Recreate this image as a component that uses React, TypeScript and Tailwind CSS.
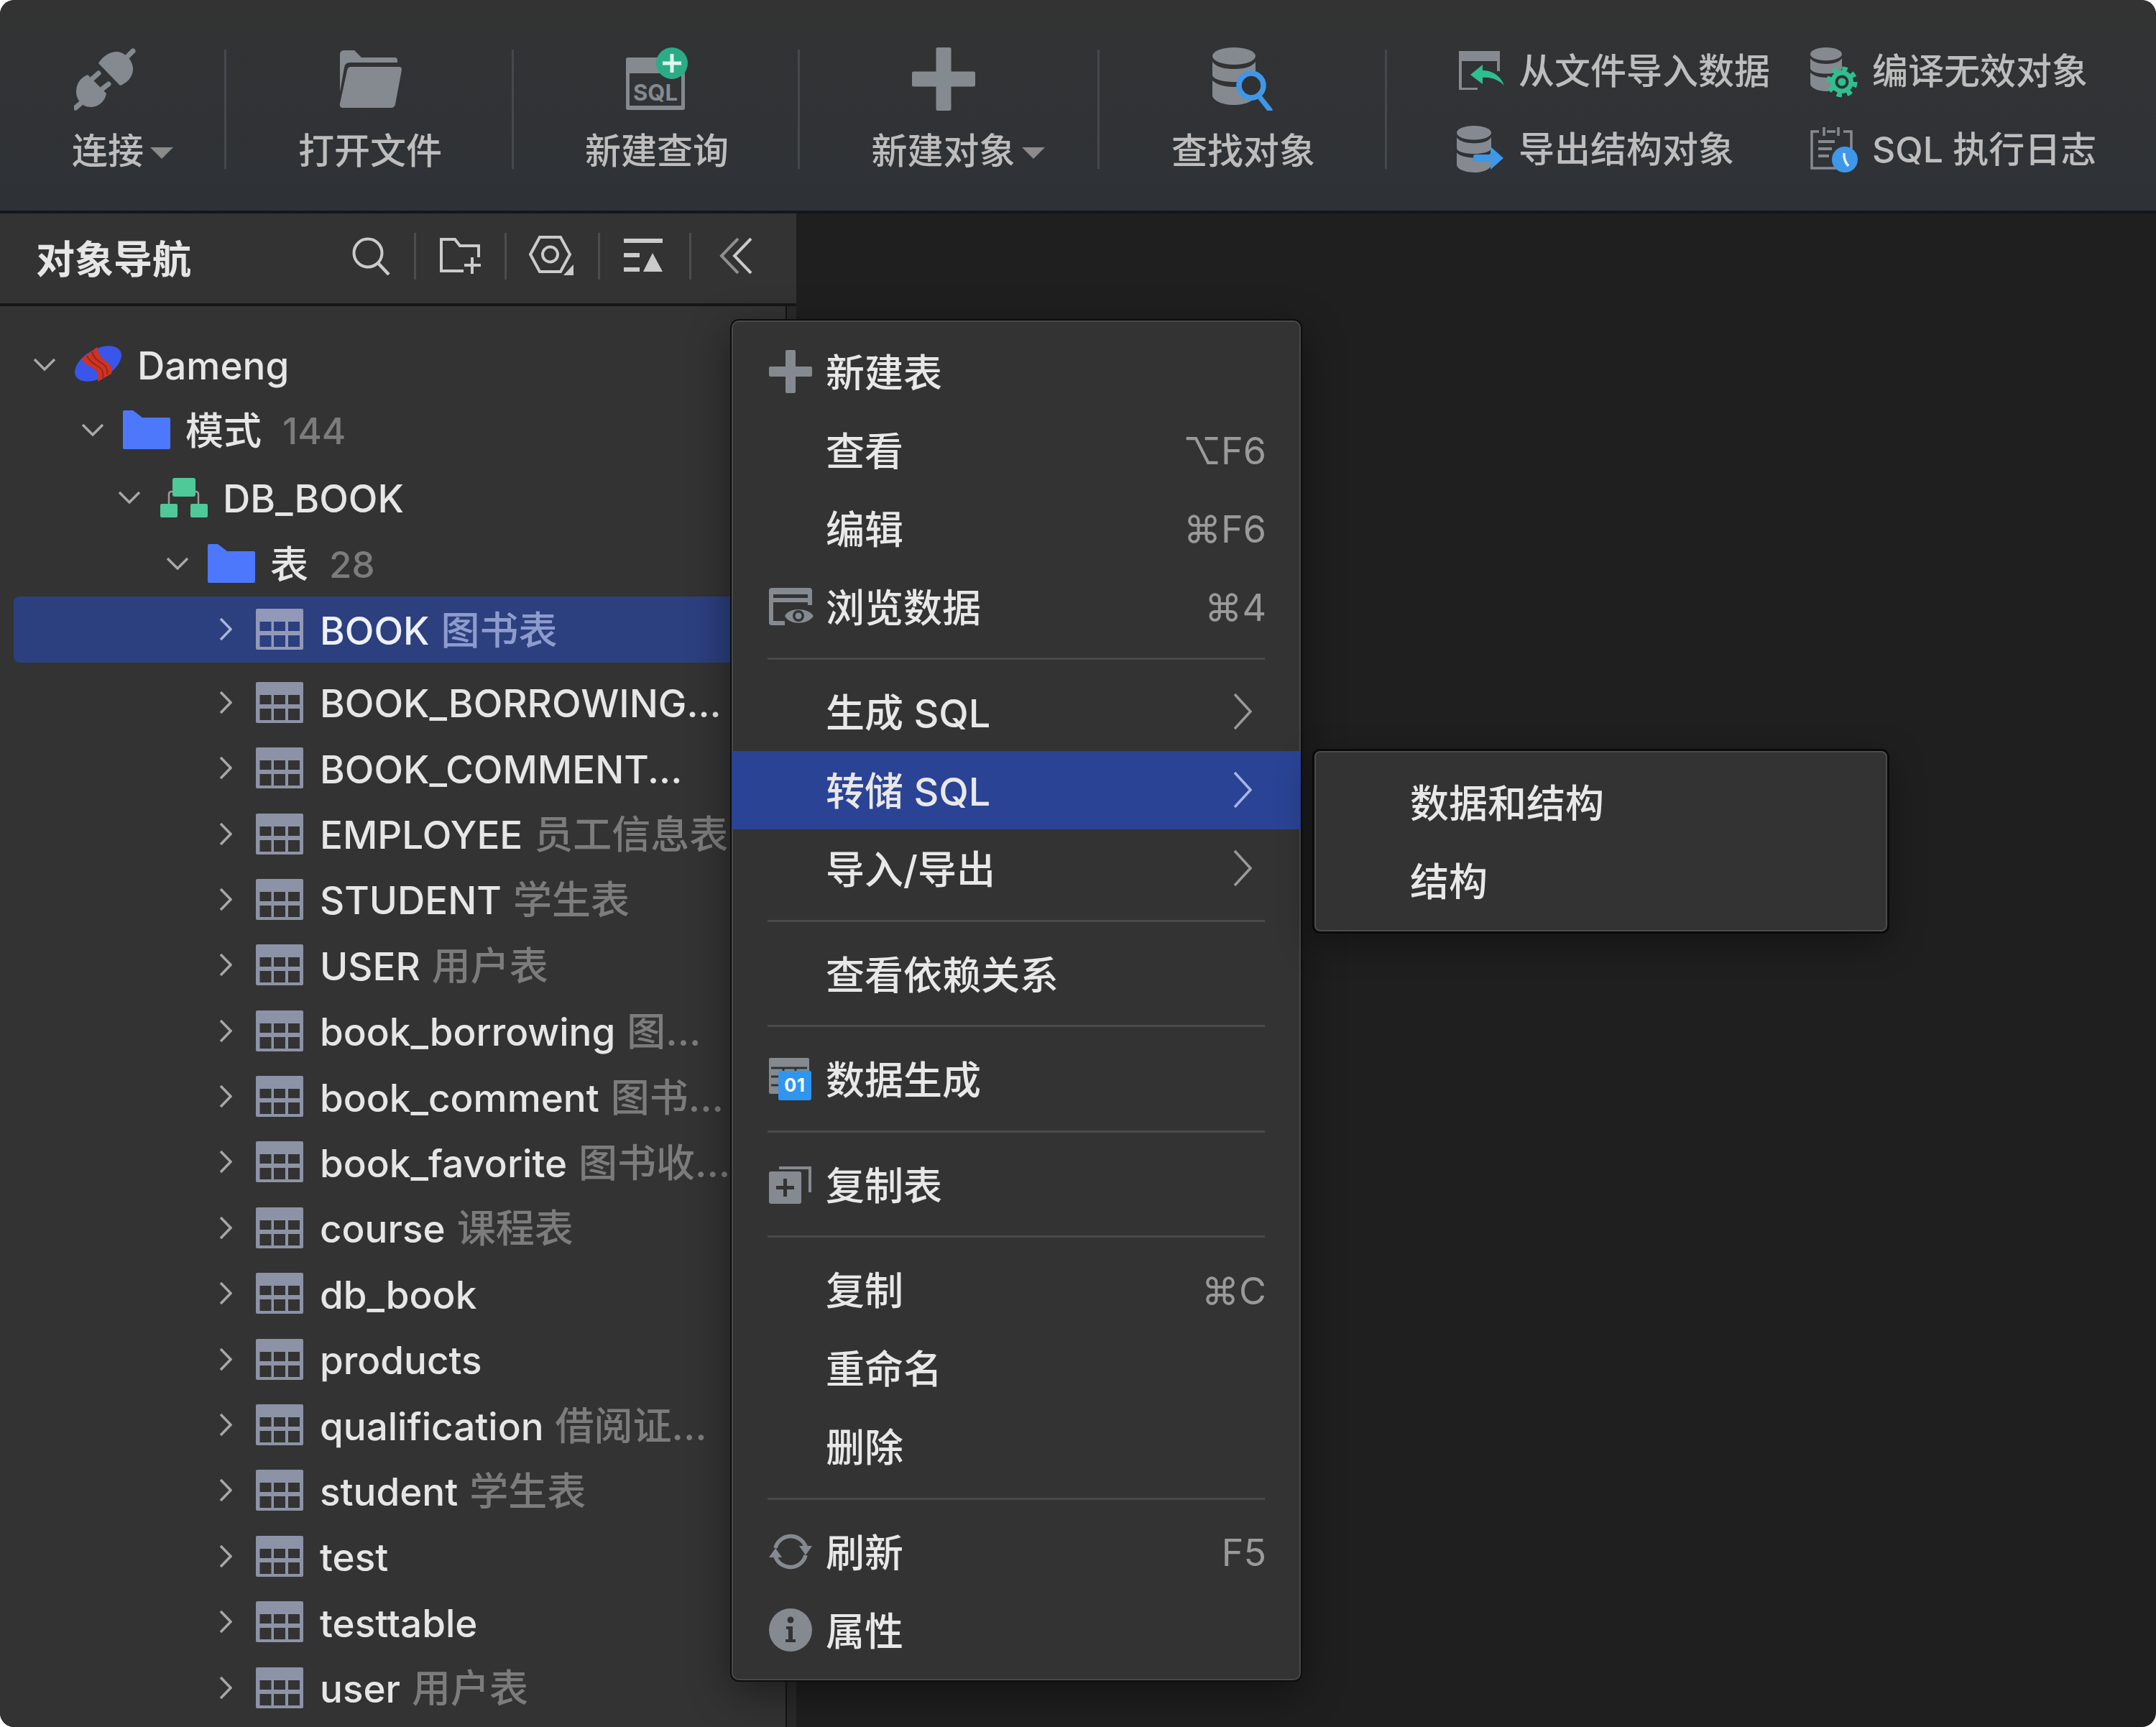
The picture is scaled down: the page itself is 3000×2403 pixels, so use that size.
import type { ReactNode } from "react";

const GREY = "#858a91";
const BLUE = "#3f97e8";
const GREEN = "#2fbf8f";

function DbStack({ w, h }: { w: number; h: number }) {
  return (
    <svg width={w} height={h} viewBox="0 0 60 80" preserveAspectRatio="none" className="block">
      <ellipse cx="30" cy="12" rx="30" ry="12" fill={GREY} />
      <path d="M0 20 C6 28 18 30 30 30 C42 30 54 28 60 20 V38 C60 44 46 48 30 48 C14 48 0 44 0 38 Z" fill={GREY} />
      <path d="M0 46 C6 52 18 55 30 55 C42 55 54 52 60 46 V66 C60 74 46 80 30 80 C14 80 0 74 0 66 Z" fill={GREY} />
    </svg>
  );
}

function PlugIcon() {
  return (
    <svg width="86" height="88" viewBox="23 16 86 88" className="block mr-[8px]">
      <path d="M57 38 C64 26 76 21 84 22 C96 24 106 36 105 48 C104 58 96 66 87 69 Z" fill={GREY} />
      <path d="M98 28 L105 21" stroke={GREY} strokeWidth="7" strokeLinecap="round" />
      <path d="M42 54 L68 80 C66 92 56 99 46 99 C34 99 26 88 26 78 C26 66 32 58 42 54 Z" fill={GREY} />
      <path d="M48 60 L57 52 M62 74 L71 67" stroke={GREY} strokeWidth="7" strokeLinecap="round" />
      <path d="M32 94 L25 100" stroke={GREY} strokeWidth="7" strokeLinecap="round" />
    </svg>
  );
}

function OpenFolderIcon() {
  return (
    <svg width="88" height="80" viewBox="0 0 88 80" className="block mt-[4px]">
      <path d="M2 6 Q2 0 8 0 H22 L32 10 H78 Q82 10 82 14 V17 H16 Q9 17 8 24 L2 58 Z" fill={GREY} />
      <path d="M17 23 H84 Q88 23 88 27 L79 75 Q78 80 73 80 H6 Q1 80 2 74 L12 28 Q13 23 17 23 Z" fill={GREY} />
    </svg>
  );
}

function SqlIcon() {
  return (
    <svg width="88" height="88" viewBox="12 16 88 88" className="block">
      <rect x="13" y="30" width="82" height="73" rx="3" fill={GREY} />
      <rect x="18" y="52" width="72" height="45" fill="#313336" />
      <text x="54" y="90" textAnchor="middle" fontSize="31" fontWeight="700" fill={GREY} fontFamily="Inter, sans-serif">SQL</text>
      <circle cx="77" cy="38" r="22" fill="#2bab86" />
      <path d="M77 25 V51 M64 38 H90" stroke="#dcf7ee" strokeWidth="5" />
    </svg>
  );
}

function PlusIcon({ size, bar }: { size: number; bar: number }) {
  return (
    <svg width={size} height={size} viewBox={`0 0 ${size} ${size}`} className="block">
      <rect x={(size - bar) / 2} y="0" width={bar} height={size} rx="2" fill={GREY} />
      <rect x="0" y={(size - bar) / 2} width={size} height={bar} rx="2" fill={GREY} />
    </svg>
  );
}

function FindIcon() {
  return (
    <div className="relative w-[86px] h-[88px]">
      <DbStack w={60} h={80} />
      <svg width="86" height="88" viewBox="0 0 86 88" className="absolute left-0 top-0">
        <circle cx="54" cy="53" r="17" fill="#2f3235" stroke={BLUE} strokeWidth="7.5" />
        <path d="M65 68 L80 87" stroke={BLUE} strokeWidth="7" strokeLinecap="round" />
      </svg>
    </div>
  );
}

function ImportIcon() {
  return (
    <svg width="64" height="56" viewBox="0 0 64 56" className="block ml-[3px]">
      <path d="M0 0 H57 V28 H53 V14 H4 V51 H26 V54 H0 Z" fill={GREY} />
      <path d="M16 33 L33 19 V27 C46 27 58 34 63 48 C54 39 44 36 33 37 V46 Z" fill={GREEN} />
    </svg>
  );
}

function CompileIcon() {
  return (
    <div className="relative w-[66px] h-[66px]">
      <DbStack w={44} h={61} />
      <svg width="44" height="44" viewBox="0 0 44 44" className="absolute left-[22px] top-[26px]">
        <circle cx="22" cy="22" r="18" fill="none" stroke={GREEN} strokeWidth="7" strokeDasharray="7 7.1" />
        <circle cx="22" cy="22" r="16" fill={GREEN} />
        <circle cx="22" cy="22" r="7.5" fill="none" stroke="#2f3235" strokeWidth="4" />
      </svg>
    </div>
  );
}

function ExportIcon() {
  return (
    <div className="relative w-[66px] h-[66px]">
      <DbStack w={48} h={65} />
      <svg width="42" height="32" viewBox="0 0 42 32" className="absolute left-[23px] top-[29px]">
        <path d="M2 11 H24 V0 L42 16 L24 32 V21 H2 Q0 21 0 16 Q0 11 2 11 Z" fill={BLUE} />
      </svg>
    </div>
  );
}

function LogIcon() {
  return (
    <svg width="66" height="66" viewBox="0 0 66 66" className="block">
      <path d="M12 8 H2 V59 H36" fill="none" stroke={GREY} strokeWidth="3.5" />
      <path d="M46 8 H57 V32" fill="none" stroke={GREY} strokeWidth="3.5" />
      <path d="M19 2 V14 M39 2 V14 M23 8 H35" stroke={GREY} strokeWidth="3.5" />
      <path d="M11 22 H34 M11 32 H30 M11 42 H26" stroke={GREY} strokeWidth="4" />
      <circle cx="48" cy="47" r="18" fill={BLUE} />
      <path d="M47 38 Q46 48 53 56" fill="none" stroke="#e8f3fd" strokeWidth="3.5" />
    </svg>
  );
}

function Caret() {
  return (
    <svg width="32" height="16" viewBox="0 0 32 16" className="absolute left-full top-[25px] ml-[9px]">
      <path d="M0 0 H32 L16 16 Z" fill="#8b8b8b" />
    </svg>
  );
}

function Sep() {
  return <div className="w-[3px] h-[166px] mt-[69px] bg-[#45494d] shrink-0" />;
}

function ToolItem({ icon, label, caret, className }: { icon: ReactNode; label: string; caret?: boolean; className: string }) {
  return (
    <div className={`flex flex-col items-center pt-[66px] shrink-0 ${className}`}>
      <div className="h-[88px] flex justify-center">{icon}</div>
      <div className="relative mt-[26px] text-[50px] leading-[60px] font-medium text-[#bdbdbd] whitespace-nowrap">
        {label}
        {caret && <Caret />}
      </div>
    </div>
  );
}

function SmallTool({ icon, label }: { icon: ReactNode; label: string }) {
  return (
    <div className="flex items-center h-[109px]">
      <div className="w-[86px] shrink-0">{icon}</div>
      <span className="text-[50px] leading-[60px] font-medium text-[#bdbdbd] whitespace-nowrap">{label}</span>
    </div>
  );
}

function Toolbar() {
  return (
    <div className="flex h-[297px] bg-gradient-to-b from-[#333333] to-[#2e3237] border-b-4 border-[#14161a] shrink-0">
      <ToolItem icon={<PlugIcon />} label="连接" caret className="w-[312px] pr-[12px]" />
      <Sep />
      <ToolItem icon={<OpenFolderIcon />} label="打开文件" className="w-[397px] pl-[3px]" />
      <Sep />
      <ToolItem icon={<SqlIcon />} label="新建查询" className="w-[395px] pl-[3px]" />
      <Sep />
      <ToolItem icon={<PlusIcon size={88} bar={21} />} label="新建对象" caret className="w-[414px] pl-[3px] pr-[18px]" />
      <Sep />
      <ToolItem icon={<FindIcon />} label="查找对象" className="w-[397px] pl-[3px]" />
      <Sep />
      <div className="grid grid-cols-[492px_auto] pt-[44px] pl-[97px] content-start">
        <SmallTool icon={<ImportIcon />} label="从文件导入数据" />
        <SmallTool icon={<CompileIcon />} label="编译无效对象" />
        <SmallTool icon={<ExportIcon />} label="导出结构对象" />
        <SmallTool icon={<LogIcon />} label="SQL 执行日志" />
      </div>
    </div>
  );
}

function HeadSep() {
  return <div className="w-[3px] h-[65px] mx-[33px] bg-[#4d4d4d] shrink-0" />;
}

function SidebarHeader() {
  const c = "#cbcbcb";
  return (
    <div className="flex items-center h-[129px] pl-[50px] border-b-4 border-[#161616] shrink-0">
      <span className="w-[440px] mt-[4px] text-[54px] leading-[64px] font-bold text-[#e6e6e6] whitespace-nowrap">对象导航</span>
      <div className="flex items-center mb-[7px]">
        <svg width="53" height="53" viewBox="0 0 53 53" className="block">
          <circle cx="22" cy="22" r="19.5" fill="none" stroke={c} strokeWidth="4" />
          <path d="M36 36 L51 52" stroke={c} strokeWidth="4.5" />
        </svg>
        <HeadSep />
        <svg width="57" height="50" viewBox="0 0 57 50" className="block">
          <path d="M33 46 H2 V2 H21 L28 11 H54 V27" fill="none" stroke={c} strokeWidth="4" />
          <path d="M45 27 V50 M34 38 H57" stroke={c} strokeWidth="4" />
        </svg>
        <HeadSep />
        <svg width="63" height="56" viewBox="0 0 63 56" className="block -ml-[2px]">
          <path d="M2 26 L15 2 H44 L57 26 L44 50 H15 Z" fill="none" stroke={c} strokeWidth="4" />
          <circle cx="29.5" cy="26" r="10.5" fill="none" stroke={c} strokeWidth="4" />
          <path d="M48 55 L62 40 V55 Z" fill={c} />
        </svg>
        <HeadSep />
        <svg width="54" height="48" viewBox="0 0 54 48" className="block">
          <rect x="0" y="0" width="54" height="6" fill={c} />
          <rect x="0" y="20" width="22" height="6" fill={c} />
          <rect x="0" y="40" width="22" height="6" fill={c} />
          <path d="M27 46 L40 20 L54 46 Z" fill={c} />
        </svg>
        <div className="w-[3px] h-[65px] ml-[37px] mr-[39px] bg-[#4d4d4d] shrink-0" />
        <svg width="46" height="50" viewBox="0 0 46 50" className="block">
          <path d="M26 1 L3 25 L26 49" fill="none" stroke="#8f8f8f" strokeWidth="4" />
          <path d="M44 1 L21 25 L44 49" fill="none" stroke={c} strokeWidth="4" />
        </svg>
      </div>
    </div>
  );
}

function ChevronDown() {
  return (
    <svg width="32" height="18" viewBox="0 0 32 18" className="block shrink-0">
      <path d="M2 2 L16 16 L30 2" fill="none" stroke="#a8a8a8" strokeWidth="3.5" />
    </svg>
  );
}

function ChevronRight({ color }: { color: string }) {
  return (
    <svg width="18" height="33" viewBox="0 0 18 33" className="block shrink-0">
      <path d="M2 2 L16 16.5 L2 31" fill="none" stroke={color} strokeWidth="3.5" />
    </svg>
  );
}

function Folder() {
  return (
    <svg width="66" height="54" viewBox="0 0 66 54" className="block shrink-0">
      <path d="M2 0 H14 L27 10 H64 Q66 10 66 12 V52 Q66 54 64 54 H2 Q0 54 0 52 V2 Q0 0 2 0 Z" fill="#4d78fb" />
    </svg>
  );
}

function Logo() {
  return (
    <svg width="66" height="52" viewBox="10 10 66 52" className="block shrink-0">
      <ellipse cx="42.5" cy="35" rx="35.6" ry="20" fill="#3a55ea" transform="rotate(-30 42.5 35)" />
      <path d="M20 28 L41 12 C43 24 49 29 55 33 C62 38 63 43 61 49 L42 60 C44 49 40 43 33 40 C26 36 21 33 20 28 Z" fill="#d2321f" />
      <path d="M27 24 C30 32 38 36 44 40 C49 43 50 49 49 55 M34 18 C36 28 44 32 50 36 C54 39 56 44 55 50" fill="none" stroke="#8e2a22" strokeWidth="2" />
    </svg>
  );
}

function SchemaIcon() {
  return (
    <svg width="67" height="56" viewBox="0 0 67 56" className="block shrink-0">
      <path d="M13 38 V24 Q13 20 17 20 H50 Q54 20 54 24 V38" fill="none" stroke="#9a9a9a" strokeWidth="2.5" />
      <rect x="18" y="1" width="32" height="26" rx="3" fill="#4fc997" />
      <rect x="1" y="37" width="24" height="19" rx="2" fill="#4fc997" />
      <rect x="43" y="37" width="24" height="19" rx="2" fill="#4fc997" />
    </svg>
  );
}

function TableIcon({ bar, hole }: { bar: string; hole: string }) {
  const xs = [5.5, 25, 45];
  const ys = [18, 37];
  return (
    <svg width="66" height="57" viewBox="0 0 66 57" className="block shrink-0">
      <rect width="66" height="57" rx="2" fill={bar} />
      {ys.map((y) => xs.map((x) => <rect key={`${x}-${y}`} x={x} y={y} width="16" height={y === 18 ? 13 : 16} fill={hole} />))}
    </svg>
  );
}

function Branch({ icon, name, count, className }: { icon: ReactNode; name: string; count?: string; className: string }) {
  return (
    <div className={`flex items-center h-[91.4px] ${className}`}>
      <ChevronDown />
      <div className="ml-[26px] mr-[21px]">{icon}</div>
      <span className="pt-[4px] text-[53px] leading-[64px] font-medium text-[#e6e6e6] whitespace-nowrap">{name}</span>
      {count && <span className="ml-[29px] pt-[4px] text-[51px] leading-[64px] font-medium text-[#7c7c7c]">{count}</span>}
    </div>
  );
}

const tables: [string, string][] = [
  ["BOOK_BORROWING...", ""],
  ["BOOK_COMMENT...", ""],
  ["EMPLOYEE", "员工信息表"],
  ["STUDENT", "学生表"],
  ["USER", "用户表"],
  ["book_borrowing", "图..."],
  ["book_comment", "图书..."],
  ["book_favorite", "图书收..."],
  ["course", "课程表"],
  ["db_book", ""],
  ["products", ""],
  ["qualification", "借阅证..."],
  ["student", "学生表"],
  ["test", ""],
  ["testtable", ""],
  ["user", "用户表"],
];

function TableRow({ name, note }: { name: string; note: string }) {
  return (
    <div className="flex items-center h-[91.4px] pl-[305px]">
      <ChevronRight color="#a8a8a8" />
      <div className="ml-[33px] mr-[23px]">
        <TableIcon bar="#8d93a6" hole="#333333" />
      </div>
      <span className="pt-[4px] text-[53px] leading-[64px] font-medium text-[#e6e6e6] whitespace-nowrap">{name}</span>
      {note && <span className="ml-[16px] pt-[4px] text-[54px] leading-[64px] font-medium text-[#7c7c7c] whitespace-nowrap">{note}</span>}
    </div>
  );
}

function Tree() {
  return (
    <div className="flex-1 min-w-0 pt-[35px] overflow-hidden bg-[#333333]">
      <Branch icon={<Logo />} name="Dameng" className="pl-[46px]" />
      <Branch icon={<Folder />} name="模式" count="144" className="pl-[113px]" />
      <Branch icon={<SchemaIcon />} name="DB_BOOK" className="pl-[164px] mt-[3px]" />
      <Branch icon={<Folder />} name="表" count="28" className="pl-[231px]" />
      <div className="flex items-center h-[92px] ml-[19px] pl-[286px] rounded-[8px] bg-[#2c3f7f] mb-[10px]">
        <ChevronRight color="#aab4d8" />
        <div className="ml-[33px] mr-[23px]">
          <TableIcon bar="#9299b8" hole="#2c3f7f" />
        </div>
        <span className="pt-[4px] text-[53px] leading-[64px] font-medium text-[#eef1fa] whitespace-nowrap">BOOK</span>
        <span className="ml-[16px] pt-[4px] text-[54px] leading-[64px] font-medium text-[#8d9ccd] whitespace-nowrap">图书表</span>
      </div>
      {tables.map(([name, note]) => (
        <TableRow key={name} name={name} note={note} />
      ))}
    </div>
  );
}

function Divider() {
  return (
    <div className="flex items-center h-[37.5px] pl-[48px] pr-[48px]">
      <div className="h-[3px] w-full bg-[#4a4a4a]" />
    </div>
  );
}

function MenuItem({ icon, label, shortcut, arrow, active }: { icon?: ReactNode; label: string; shortcut?: string; arrow?: boolean; active?: boolean }) {
  const pad = active ? "-mx-[2px] pl-[52px] pr-[68px] bg-[#2b4395]" : arrow ? "pl-[50px] pr-[66px]" : "pl-[50px] pr-[46px]";
  return (
    <div className={`flex items-center h-[109px] ${pad}`}>
      <div className="w-[79px] shrink-0">{icon}</div>
      <span className="pt-[6px] text-[54px] leading-[64px] font-medium text-[#e8e8e8] whitespace-nowrap">{label}</span>
      {shortcut && <span className="ml-auto pt-[5px] text-[52px] leading-[64px] text-[#9a9a9a] font-['Inter','DejaVu_Sans',sans-serif]">{shortcut}</span>}
      {arrow && (
        <svg width="26" height="52" viewBox="0 0 26 52" className="block ml-auto">
          <path d="M2 2 L24 26 L2 50" fill="none" stroke={active ? "#a5b5e6" : "#9a9a9a"} strokeWidth="3.5" />
        </svg>
      )}
    </div>
  );
}

function BrowseIcon() {
  return (
    <svg width="62" height="52" viewBox="0 0 62 52" className="block">
      <path d="M0 4 Q0 0 4 0 H56 Q60 0 60 4 V24 H54 V20 H6 V46 H22 V52 H4 Q0 52 0 48 Z" fill={GREY} />
      <rect x="6" y="9" width="48" height="5" fill="#333333" />
      <path d="M22 39 C28 27 54 27 62 39 C54 52 28 52 22 39 Z" fill={GREY} />
      <circle cx="41" cy="39" r="8" fill="#333333" />
      <circle cx="41" cy="39" r="4.5" fill={GREY} />
    </svg>
  );
}

function DataGenIcon() {
  return (
    <div className="relative w-[60px] h-[59px]">
      <svg width="56" height="50" viewBox="0 0 56 50" className="block">
        <rect width="56" height="50" rx="2" fill={GREY} />
        <path d="M3 14 H53 M3 26 H53 M3 38 H53 M20 14 V47 M37 14 V47" stroke="#333333" strokeWidth="3" />
      </svg>
      <div className="absolute left-[13px] top-[18px] w-[46px] h-[41px] rounded-[3px] bg-[#2f95ef] flex items-center justify-center text-[25px] leading-none font-bold text-white tracking-[1px]">
        01
      </div>
    </div>
  );
}

function CopyTableIcon() {
  return (
    <svg width="60" height="54" viewBox="0 0 60 54" className="block">
      <path d="M14 5 V2 H59 V38 H55 V6 H14 Z" fill={GREY} />
      <rect x="0" y="9" width="45" height="45" rx="3" fill={GREY} />
      <path d="M22.5 19 V44 M10 31.5 H35" stroke="#333333" strokeWidth="5" />
    </svg>
  );
}

function RefreshIcon() {
  return (
    <svg width="60" height="54" viewBox="0 0 60 54" className="block">
      <path d="M9 22 A22 22 0 0 1 51 20" fill="none" stroke={GREY} strokeWidth="5.5" />
      <path d="M51 32 A22 22 0 0 1 9 34" fill="none" stroke={GREY} strokeWidth="5.5" />
      <path d="M42 19 L60 19 L51 32 Z" fill={GREY} />
      <path d="M0 35 L18 35 L9 22 Z" fill={GREY} />
    </svg>
  );
}

function InfoIcon() {
  return (
    <svg width="60" height="60" viewBox="0 0 60 60" className="block">
      <circle cx="30" cy="30" r="30" fill={GREY} />
      <circle cx="30" cy="16" r="4.5" fill="#333333" />
      <path d="M24 25 H33 V43 H37 V47 H23 V43 H27 V29 H24 Z" fill="#333333" />
    </svg>
  );
}

function ContextMenu() {
  return (
    <div className="absolute left-[1018px] top-[446px] w-[792px] h-[1892px] pt-[14px] rounded-[10px] bg-[#333333] border-2 border-[#484848] shadow-[0_0_0_2px_#0e0e0e,0_16px_60px_rgba(0,0,0,0.45)]">
      <MenuItem icon={<PlusIcon size={60} bar={14} />} label="新建表" />
      <MenuItem label="查看" shortcut="⌥F6" />
      <MenuItem label="编辑" shortcut="⌘F6" />
      <MenuItem icon={<BrowseIcon />} label="浏览数据" shortcut="⌘4" />
      <Divider />
      <MenuItem label="生成 SQL" arrow />
      <MenuItem label="转储 SQL" arrow active />
      <MenuItem label="导入/导出" arrow />
      <Divider />
      <MenuItem label="查看依赖关系" />
      <Divider />
      <MenuItem icon={<DataGenIcon />} label="数据生成" />
      <Divider />
      <MenuItem icon={<CopyTableIcon />} label="复制表" />
      <Divider />
      <MenuItem label="复制" shortcut="⌘C" />
      <MenuItem label="重命名" />
      <MenuItem label="删除" />
      <Divider />
      <MenuItem icon={<RefreshIcon />} label="刷新" shortcut="F5" />
      <MenuItem icon={<InfoIcon />} label="属性" />
    </div>
  );
}

function SubMenu() {
  return (
    <div className="absolute left-[1829px] top-[1045px] w-[797px] h-[251px] pt-[17px] pl-[131px] rounded-[8px] bg-[#333333] border-2 border-[#4c4c4c] shadow-[0_0_0_3px_#0a0a0a,0_14px_50px_rgba(0,0,0,0.4)]">
      <div className="flex items-center h-[109px] text-[54px] leading-[64px] font-medium text-[#e8e8e8]">数据和结构</div>
      <div className="flex items-center h-[109px] text-[54px] leading-[64px] font-medium text-[#e8e8e8]">结构</div>
    </div>
  );
}

export default function App() {
  return (
    <div className="w-[3000px] h-[2403px] bg-white font-['Inter','Noto_Sans_CJK_SC',sans-serif]">
      <div className="relative flex flex-col w-full h-full rounded-[20px] overflow-hidden bg-[#1f1f1f]">
        <Toolbar />
        <div className="flex flex-1 min-h-0">
          <div className="flex flex-col w-[1108px] shrink-0 bg-[#333333]">
            <SidebarHeader />
            <div className="flex flex-1 min-h-0">
              <Tree />
              <div className="w-[15px] shrink-0 bg-[#2a2a2a] border-l-2 border-[#141414]" />
            </div>
          </div>
        </div>
        <ContextMenu />
        <SubMenu />
      </div>
    </div>
  );
}
